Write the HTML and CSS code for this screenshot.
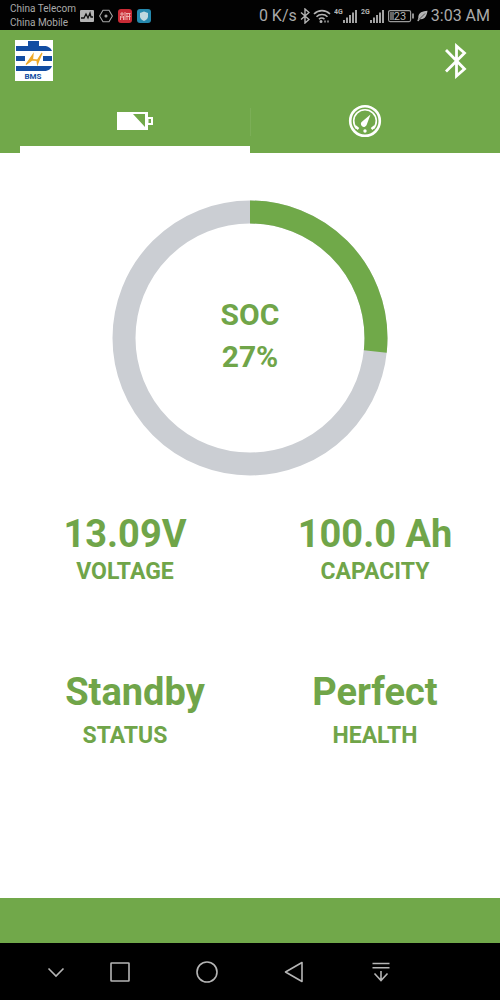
FILE: index.html
```html
<!DOCTYPE html>
<html lang="en">
<head>
<meta charset="utf-8">
<meta name="viewport" content="width=device-width, initial-scale=1">
<title>BMS</title>
<link rel="stylesheet" href="styles.css">
</head>
<body>
<div class="statusbar">
  <div class="carriers"><span>China Telecom</span><span>China Mobile</span></div>
  <div class="notices">
    <svg width="14" height="14" viewBox="0 0 14 14"><rect y="1" width="14" height="12" rx="1" fill="#b4b4b4"/><path d="M1 9h3l2-4 2 4 2-5 1 4h2" fill="none" stroke="#111" stroke-width="1.3"/></svg>
    <svg width="14" height="14" viewBox="0 0 14 14" fill="none" stroke="#a6a6a6" stroke-width="1.1"><path d="M4 1.2h6L13.4 7 10 12.8H4L.6 7z"/><circle cx="7" cy="7" r="1" fill="#a6a6a6"/></svg>
    <svg width="14" height="14" viewBox="0 0 14 14"><rect width="14" height="14" rx="3" fill="#c92b35"/><path d="M2 5h4M4 3v4M2.500 7v4M5.500 7v4M2 8h4M7 3v8M9 4v7M11.500 4v7M8 4.500h4.500M8 7.500h4.500" stroke="#efb0ae" fill="none"/></svg>
    <svg width="14" height="14" viewBox="0 0 14 14"><rect width="14" height="14" rx="3" fill="#2588ad"/><path d="M7 2.500l4 1.500v3.500c0 2-2 3.500-4 4.500-2-1-4-2.500-4-4.500V4z" fill="#bfd8df"/></svg>
  </div>
  <div class="signals">
    <span class="speed">0 K/s</span>
    <svg width="10" height="16" viewBox="0 0 10 16" fill="none" stroke="#b4b4b4" stroke-width="1.4"><path d="M1 4.500l8 7L5 15V1l4 3.500-8 7"/></svg>
    <svg width="18" height="16" viewBox="0 0 18 16" fill="none" stroke="#b4b4b4" stroke-width="1.6"><path d="M1 6c4.500-4.500 11.500-4.500 16 0M3.500 8.700c3-3 8-3 11 0M6 11.200c1.500-1.500 4-1.500 5.500 0"/><circle cx="8" cy="13.500" r=".7"/><path d="M12 12.500v2M15 12.500v2" stroke-width="1.3"/></svg>
    <svg class="cell" width="24" height="16" viewBox="0 0 24 16"><text x="0" y="6">4G</text><path d="M10 12v3M13 9.500V15M16 7v8M19 4.500V15M22 2v13" stroke="#b4b4b4" stroke-width="1.8"/></svg>
    <svg class="cell" width="24" height="16" viewBox="0 0 24 16"><text x="0" y="6">2G</text><path d="M10 12v3M13 9.500V15M16 7v8M19 4.500V15M22 2v13" stroke="#b4b4b4" stroke-width="1.8"/></svg>
    <svg class="level" width="26" height="14" viewBox="0 0 26 14"><rect x=".6" y="1.600" width="22" height="11" rx="1.500" fill="none" stroke="#999" stroke-width="1.200"/><rect x="2" y="3" width="4" height="8" fill="#666"/><path d="M25 4.500v5" stroke="#b4b4b4" stroke-width="1.600"/><text x="12" y="11" text-anchor="middle">23</text></svg>
    <svg width="11" height="12" viewBox="0 0 11 12"><path d="M10.500.8C6 1 1 2.500 1.300 8L.3 11l1.200.3L3 9.300C8 10 10 5 10.500.8z" fill="#b4b4b4"/><path d="M2 9.500l6-6" stroke="#222" stroke-width=".7"/></svg>
    <span class="clock">3:03 AM</span>
  </div>
</div>
<header class="header">
  <div class="toolbar">
    <svg class="logo" width="38" height="41" viewBox="0 0 38 41" role="img" aria-label="BMS logo"><rect width="38" height="41" fill="#fff"/><g fill="#124da2"><path d="M13 1h11v5h5c4 0 7 2 8 5H1V6h12zM1 16h9v5H1zM28 16h9v5h-9zM1 26h36c-1 3-4 5-8 5H1z"/></g><path d="M11 24.500l7-10-.5 5 5 .5L27 13l-4.500 11-.5-3.500-5-.5z" fill="#eea928" stroke="#eea928" stroke-width="1.200"/><text x="18" y="39" text-anchor="middle">BMS</text></svg>
    <button class="bt" type="button" aria-label="Bluetooth"><svg width="22" height="36" viewBox="0 0 22 36" fill="none" stroke="#fff" stroke-width="2.800"><path d="M1 7l18.500 19L11.500 33V3l8 7L1 28.500"/></svg></button>
  </div>
  <nav class="tabs">
    <button class="tab active" type="button" aria-label="Battery"><svg width="36" height="18" viewBox="0 0 36 18"><path d="M0 0h31v5h5v8h-5v5H0z" fill="#fff"/><path d="M16 2h12v13zM31.500 7h2.500v4h-2.500z" fill="#71a84a"/></svg></button>
    <span class="divider"></span>
    <button class="tab" type="button" aria-label="Gauge"><svg width="34" height="34" viewBox="0 0 34 34" fill="none" stroke="#fff"><circle cx="17" cy="17" r="14.800" stroke-width="2.600"/><path d="M8.500 24.500A11.300 11.300 0 1 1 25.500 24.500" stroke-width="1.600"/><path d="M7.500 22.500l3 2.500M26.500 22.500l-3 2.500" stroke-width="2.400"/><path d="M22.500 10.500l-3.700 10a3 3 0 1 1-4.300-3.300z" fill="#fff" stroke="none"/><circle cx="17" cy="27" r="1.700" fill="#fff" stroke="none"/></svg></button>
  </nav>
</header>
<main class="main">
  <section class="gauge">
    <svg class="ring" viewBox="0 0 276 276" fill="none" stroke-width="23"><circle cx="138" cy="138" r="126" stroke="#cbced3"/><circle cx="138" cy="138" r="126" stroke="#70a949" pathLength="100" stroke-dasharray="26.7 73.3" transform="rotate(-90 138 138)"/></svg>
    <div class="reading"><span>SOC</span><span>27%</span></div>
  </section>
  <dl class="stats">
    <div class="stat"><dd>13.09V</dd><dt>VOLTAGE</dt></div>
    <div class="stat"><dd>100.0 Ah</dd><dt>CAPACITY</dt></div>
    <div class="stat roomy"><dd class="state">Standby</dd><dt>STATUS</dt></div>
    <div class="stat roomy"><dd>Perfect</dd><dt>HEALTH</dt></div>
  </dl>
</main>
<footer class="footer"></footer>
<nav class="navbar">
  <button class="small" type="button" aria-label="Hide"><svg width="28" height="28" viewBox="0 0 28 28"><path d="M6.500 10.500l7.500 7.500 7.500-7.500"/></svg></button>
  <button class="small recent" type="button" aria-label="Recent"><svg width="28" height="28" viewBox="0 0 28 28"><rect x="5" y="5" width="18" height="18" rx=".5"/></svg></button>
  <button type="button" aria-label="Home"><svg width="28" height="28" viewBox="0 0 28 28"><circle cx="14" cy="14" r="10"/></svg></button>
  <button type="button" aria-label="Back"><svg width="28" height="28" viewBox="0 0 28 28"><path d="M22 4.500v19L5.500 14z" stroke-linejoin="round"/></svg></button>
  <button type="button" aria-label="Notifications"><svg width="28" height="28" viewBox="0 0 28 28"><path d="M5.500 5.500h17M5.500 9.800h17M14 13v9.500M7.500 15.500l6.500 7 6.500-7"/></svg></button>
</nav>
</body>
</html>
```
FILE: styles.css
```css
* { box-sizing: border-box; }
body {
  margin: 0;
  min-height: 100vh;
  display: flex;
  flex-direction: column;
  background: #fff;
  color: #70a549;
  font-family: Roboto, "Liberation Sans", sans-serif;
}
svg { display: block; flex: none; }
button {
  display: flex;
  align-items: center;
  justify-content: center;
  padding: 0;
  border: 0;
  background: none;
}
.statusbar {
  display: flex;
  align-items: center;
  height: 30px;
  padding: 2px 10px 0;
  background: #020202;
  color: #aaa;
  white-space: nowrap;
}
.carriers {
  display: flex;
  flex-direction: column;
  width: 70px;
  font-size: 10px;
  line-height: 14px;
}
.notices { display: flex; gap: 5px; }
.signals {
  display: flex;
  align-items: center;
  gap: 3px;
  margin-left: auto;
}
.speed, .clock { font-size: 16px; line-height: 20px; }
.cell text { fill: #b4b4b4; font-size: 7px; font-weight: 700; }
.level text { fill: #b4b4b4; font-size: 11px; }
.header { background: #71a84a; }
.toolbar {
  display: flex;
  align-items: flex-start;
  justify-content: space-between;
  padding: 10px 33px 0 15px;
}
.logo text { fill: #124da2; font-size: 8px; font-weight: 700; }
.bt { padding-top: 3px; }
.tabs {
  display: flex;
  height: 72px;
  padding: 0 20px;
}
.tab {
  flex: 1;
  padding: 15px 0 0;
  border-bottom: 7px solid transparent;
}
.tab.active { border-bottom-color: #fff; }
.divider {
  width: 1px;
  height: 28px;
  margin-top: 27px;
  background: #7bae57;
}
.main { flex: 1; padding-top: 47px; }
.gauge {
  display: grid;
  place-items: center;
}
.gauge > * { grid-area: 1 / 1; }
.ring { width: 276px; max-width: 90%; }
.reading {
  display: flex;
  flex-direction: column;
  align-items: center;
  padding-bottom: 4px;
  font-size: 30px;
  font-weight: 700;
  line-height: 42px;
}
.stats {
  display: grid;
  grid-template-columns: 1fr 1fr;
  row-gap: 82px;
  margin: 34px 0;
}
.stat {
  display: flex;
  flex-direction: column;
  align-items: center;
}
.roomy { gap: 6px; }
.stat dd {
  margin: 0;
  font-size: 38px;
  font-weight: 700;
  line-height: 48px;
}
.stat .state { padding-left: 20px; }
.stat dt {
  font-size: 23px;
  font-weight: 700;
  line-height: 28px;
}
.footer { height: 45px; background: #71a84a; }
.navbar {
  display: flex;
  height: 57px;
  padding: 0 76px 0 24px;
  background: #000;
}
.navbar button { flex: 87; }
.navbar .small { flex: 64; }
.navbar .recent { margin-right: 12px; }
.navbar svg { fill: none; stroke: #b5b5b5; stroke-width: 1.6; }
```
